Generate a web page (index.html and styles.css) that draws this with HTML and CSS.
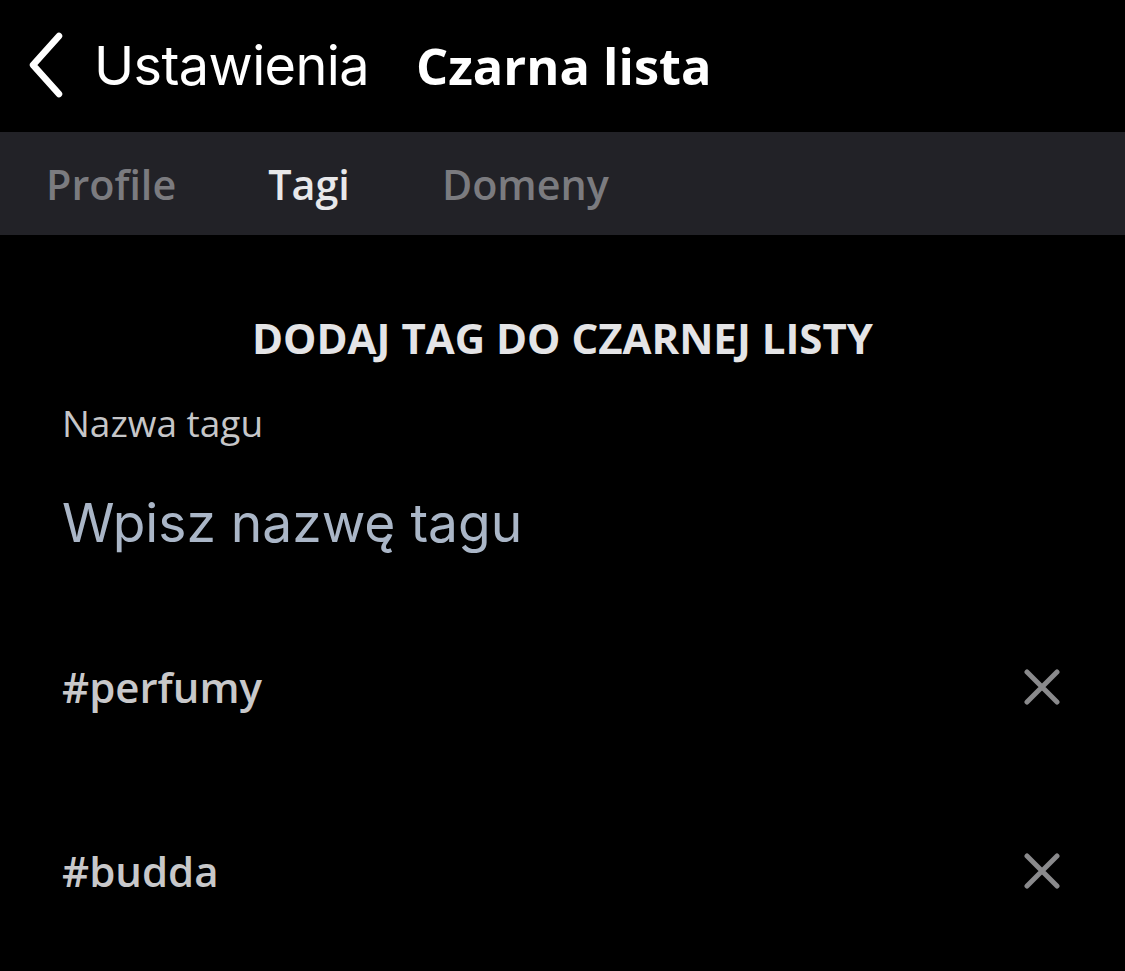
FILE: index.html
```html
<!DOCTYPE html>
<html lang="pl">
<head>
<meta charset="utf-8">
<title>Czarna lista</title>
<link rel="stylesheet" href="styles.css">
</head>
<body>
<div class="screen">
  <header class="navbar">
    <a class="back">
      <svg class="chevron" width="40" height="66" viewBox="0 0 40 66" aria-hidden="true">
        <path d="M33 4 L7 33 L33 62" fill="none" stroke="#ffffff" stroke-width="6.5" stroke-linecap="round" stroke-linejoin="round"/>
      </svg>
      <span class="back-label">Ustawienia</span>
    </a>
    <h1 class="nav-title">Czarna lista</h1>
  </header>

  <nav class="tabs">
    <span class="tab">Profile</span>
    <span class="tab active">Tagi</span>
    <span class="tab">Domeny</span>
  </nav>

  <main class="content">
    <h2 class="section-title">DODAJ TAG DO CZARNEJ LISTY</h2>
    <label class="field-label">Nazwa tagu</label>
    <div class="field-input">Wpisz nazwę tagu</div>

    <ul class="tag-list">
      <li class="tag-row">
        <span class="tag-name">#perfumy</span>
        <svg class="remove" width="36" height="36" viewBox="0 0 36 36" aria-hidden="true">
          <path d="M3 3 L33 33 M33 3 L3 33" stroke="#8a8a8c" stroke-width="5" stroke-linecap="round"/>
        </svg>
      </li>
      <li class="tag-row">
        <span class="tag-name">#budda</span>
        <svg class="remove" width="36" height="36" viewBox="0 0 36 36" aria-hidden="true">
          <path d="M3 3 L33 33 M33 3 L3 33" stroke="#8a8a8c" stroke-width="5" stroke-linecap="round"/>
        </svg>
      </li>
    </ul>
  </main>
</div>
</body>
</html>
```

FILE: styles.css
```css
html, body {
  margin: 0;
  padding: 0;
  background: #000000;
}

.screen {
  width: 1125px;
  height: 971px;
  background: #000000;
  overflow: hidden;
  font-family: "Open Sans", "Liberation Sans", sans-serif;
}

.navbar {
  height: 132px;
  display: flex;
  align-items: center;
  padding-left: 26px;
  box-sizing: border-box;
}

.back {
  display: flex;
  align-items: center;
  color: #ffffff;
}

.chevron {
  display: block;
  margin-top: -2px;
}

.back-label {
  font-family: "Inter", "Liberation Sans", sans-serif;
  font-weight: 400;
  font-size: 54px;
  line-height: 66px;
  margin-left: 28px;
  letter-spacing: -0.6px;
  color: #ffffff;
}

.nav-title {
  margin: 0 0 0 47px;
  font-family: "Open Sans", "Liberation Sans", sans-serif;
  font-weight: 700;
  font-size: 50.5px;
  line-height: 66px;
  color: #ffffff;
}

.tabs {
  height: 103px;
  background: #222227;
  display: flex;
  align-items: center;
  gap: 92px;
  padding-left: 46px;
  box-sizing: border-box;
}

.tab {
  font-weight: 600;
  font-size: 41.3px;
  line-height: 56px;
  color: #7b7b7f;
}

.tab.active {
  color: #e8e8ea;
}

.content {
  padding: 78px 66px 0 62px;
}

.section-title {
  margin: 0;
  text-align: center;
  padding-left: 4px;
  font-weight: 700;
  font-size: 42px;
  line-height: 50px;
  color: #e4e4e6;
}

.field-label {
  display: block;
  margin-top: 38px;
  font-weight: 400;
  font-size: 37px;
  line-height: 44px;
  color: #c6c6c8;
}

.field-input {
  margin-top: 45px;
  font-family: "Inter", "Liberation Sans", sans-serif;
  font-size: 53.3px;
  line-height: 66px;
  color: #aab6c7;
}

.tag-list {
  list-style: none;
  margin: 39px 0 0 0;
  padding: 0;
}

.tag-row {
  height: 184px;
  display: flex;
  align-items: center;
  justify-content: space-between;
}

.tag-name {
  font-weight: 600;
  font-size: 42px;
  line-height: 184px;
  color: #c8c8ca;
}

.remove {
  display: block;
  margin-right: -1px;
}
```
